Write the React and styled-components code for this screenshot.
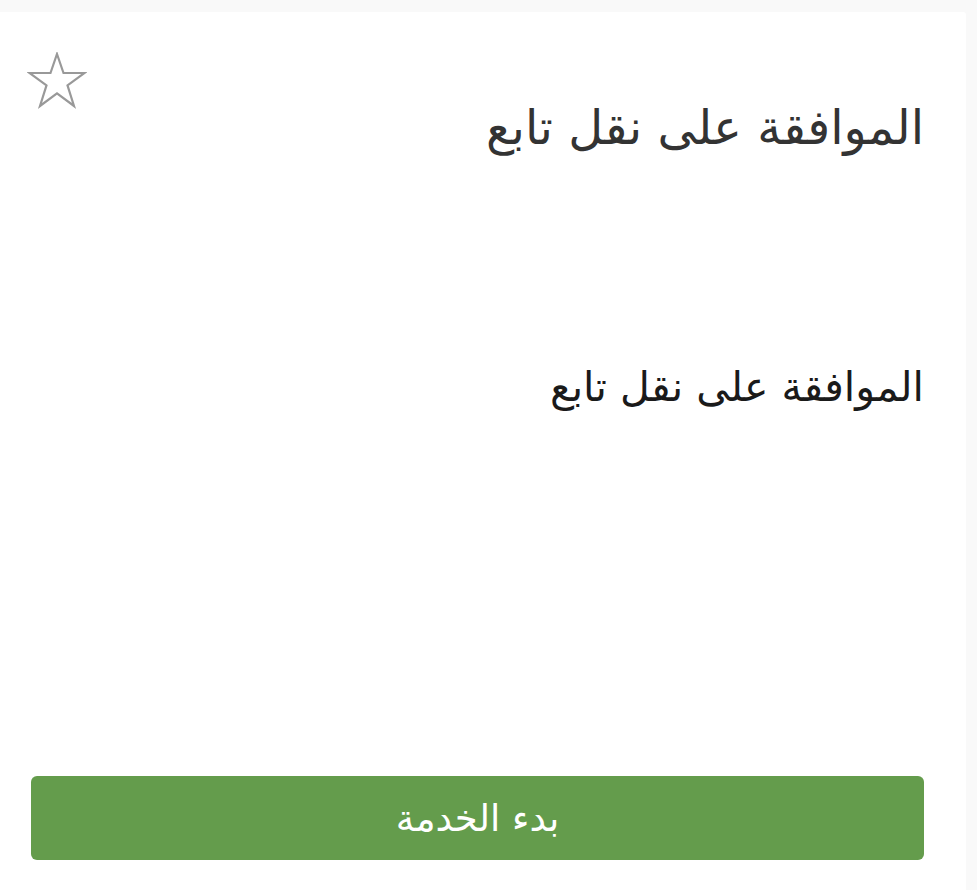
import styled, { createGlobalStyle } from "styled-components"

const Global = createGlobalStyle`
  html, body {
    margin: 0;
    padding: 0;
    background: #f9f9f9;
    font-family: "DejaVu Sans", "Liberation Sans", sans-serif;
  }
`;

const Card = styled.div`
  margin: 12px 11px 0 0;
  background: #fff;
  border-top-right-radius: 3px;
  min-height: 878px;
  box-sizing: border-box;
  padding: 38px 42px 30px 31px;
  display: flex;
  flex-direction: column;
  direction: rtl;
`;

const Header = styled.div`
  display: flex;
  justify-content: space-between;
  align-items: flex-start;
`;

const Title = styled.h1`
  margin: 49px 0 0;
  font-size: 48px;
  font-weight: 400;
  line-height: 56px;
  color: #333;
`;

const StarButton = styled.button`
  border: 0;
  background: none;
  padding: 0;
  margin: 2px 0 0 -4px;
  color: #999;
  display: flex;
  cursor: pointer;
`;

const Body = styled.p`
  margin: 207px 0 0;
  font-size: 41px;
  font-weight: 400;
  line-height: 50px;
  color: #1a1a1a;
  flex: 1;
`;

const StartButton = styled.button`
  height: 84px;
  border: 0;
  border-radius: 6px;
  background: #649c4c;
  color: #fff;
  font-family: inherit;
  font-size: 37px;
  cursor: pointer;
`;

function StarIcon() {
    return (
        <svg width="60" height="58" viewBox="0 0 60 58" fill="none">
            <polygon
                points="30,2 36.5,21 57.6,21 40.5,33.4 47,54 30,41.3 13,54 19.5,33.4 2.4,21 23.5,21"
                stroke="currentColor"
                strokeWidth="2.2"
                strokeLinejoin="miter"
            />
        </svg>
    )
}

function App() {
    return (
        <>
            <Global />
            <Card>
                <Header>
                    <Title>الموافقة على نقل تابع</Title>
                    <StarButton aria-label="مفضلة">
                        <StarIcon />
                    </StarButton>
                </Header>
                <Body>الموافقة على نقل تابع</Body>
                <StartButton>بدء الخدمة</StartButton>
            </Card>
        </>
    )
}

export default App;
